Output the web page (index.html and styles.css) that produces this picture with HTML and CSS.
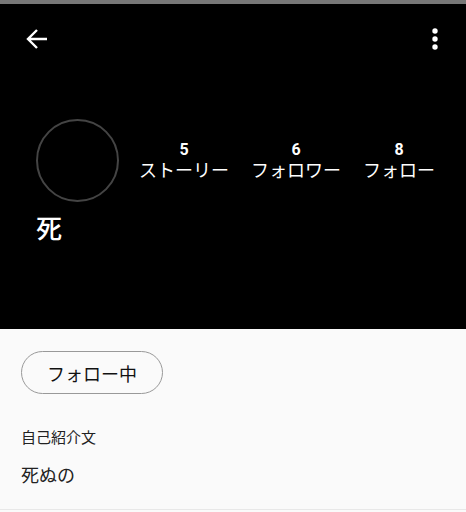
FILE: index.html
```html
<!DOCTYPE html>
<html lang="ja">
<head>
<meta charset="utf-8">
<title>プロフィール</title>
<link rel="stylesheet" href="styles.css">
</head>
<body>
<div class="statusLine"></div>
<div id="profileHead">
  <div class="toolbar">
    <svg class="backIcon" width="22" height="22" viewBox="0 0 22 22">
      <path d="M21 11H2M11 2L2 11l9 9" fill="none" stroke="#fff" stroke-width="2.4"/>
    </svg>
    <svg class="moreIcon" width="6" height="22" viewBox="0 0 6 22">
      <circle cx="3" cy="3" r="2.7" fill="#fff"/>
      <circle cx="3" cy="11" r="2.7" fill="#fff"/>
      <circle cx="3" cy="19" r="2.7" fill="#fff"/>
    </svg>
  </div>
  <div class="userRow">
    <div class="avatar"></div>
    <ul class="stats">
      <li><b>5</b><span>ストーリー</span></li>
      <li><b>6</b><span>フォロワー</span></li>
      <li><b>8</b><span>フォロー</span></li>
    </ul>
  </div>
  <p class="userName">死</p>
</div>
<div id="profileBody">
  <button class="followBtn">フォロー中</button>
  <p class="bioTitle">自己紹介文</p>
  <p class="bioText">死ぬの</p>
</div>
</body>
</html>
```
FILE: styles.css
```css
*{margin:0; padding:0;}
body{background:#fafafa; font-family:Roboto, "Noto Sans CJK JP", sans-serif; color:#222;}
li{list-style:none;}

.statusLine{height:4px; background:#777;}

#profileHead{height:325px; background:#000; color:#fff;}
.toolbar{height:70px; display:flex; justify-content:space-between; align-items:center; padding:0 28px 0 26px;}
.toolbar svg{display:block;}

.userRow{display:flex; align-items:center; margin-top:45px; padding-left:36px;}
.avatar{width:79px; height:79px; border:2px solid #444; border-radius:50%;}
.stats{display:flex; gap:22px; margin-left:20px;}
.stats li{display:flex; flex-direction:column; align-items:center;}
.stats b{font-size:16px; line-height:20px; font-weight:bold;}
.stats span{font-size:18px; line-height:22px;}

.userName{font-size:26px; line-height:26px; margin:14px 0 0 36px; font-weight:500;}

#profileBody{height:181px; border-bottom:1px solid #e8e8e8; padding:22px 0 0 21px; box-sizing:border-box;}
.followBtn{width:142px; height:43px; border:1px solid #999; border-radius:22px; background:none;
font-family:"Noto Sans CJK JP", sans-serif; font-size:18px; color:#111;}
.bioTitle{font-size:15px; line-height:20px; margin-top:34px;}
.bioText{font-size:18px; line-height:22px; margin-top:17px;}
```
